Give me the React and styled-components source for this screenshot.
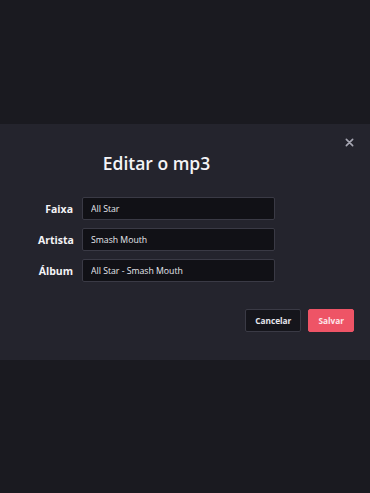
import React from "react";
import styled, { createGlobalStyle } from "styled-components";

const Global = createGlobalStyle`
  html, body { margin: 0; padding: 0; }
  body {
    background: #1a1a20;
    font-family: "Open Sans", "Noto Sans", sans-serif;
    color: #f2f2f5;
    min-height: 100vh;
  }
`;

const Page = styled.div`
  min-height: 493px;
  padding-top: 124px;
  box-sizing: border-box;
`;

const Modal = styled.div`
  position: relative;
  background: #24242d;
  padding: 25px 16px 28px 38px;
  display: flex;
  flex-direction: column;
`;

const Close = styled.button`
  position: absolute;
  top: 10px;
  right: 13px;
  width: 16px;
  height: 16px;
  padding: 0;
  border: none;
  background: transparent;
  color: #a6a6b2;
  display: flex;
  align-items: center;
  justify-content: center;
  cursor: pointer;
`;

const Content = styled.div`
  width: 237px;
  display: flex;
  flex-direction: column;
`;

const Title = styled.h2`
  margin: 0;
  text-align: center;
  font-size: 17.5px;
  line-height: 28px;
  font-weight: 600;
  color: #f4f4f7;
`;

const Form = styled.div`
  margin-top: 20px;
  display: grid;
  grid-template-columns: 35px 193px;
  column-gap: 9px;
  row-gap: 8px;
  align-items: center;
`;

const Label = styled.label`
  text-align: right;
  white-space: nowrap;
  font-size: 10.5px;
  font-weight: 700;
  color: #f4f4f7;
`;

const Input = styled.input`
  height: 23px;
  box-sizing: border-box;
  width: 100%;
  background: #111116;
  border: 1px solid #3a3a45;
  border-radius: 2px;
  color: #e8e8ee;
  font-family: "Open Sans", "Noto Sans", sans-serif;
  font-size: 8.7px;
  padding: 0 8px;
  outline: none;
`;

const Actions = styled.div`
  margin-top: 27px;
  display: flex;
  justify-content: flex-end;
  gap: 7px;
`;

const Button = styled.button`
  height: 23px;
  box-sizing: border-box;
  padding: 0 9px;
  border-radius: 2px;
  font-family: "Open Sans", "Noto Sans", sans-serif;
  font-size: 8.3px;
  font-weight: 700;
  cursor: pointer;
  border: 1px solid ${(p) => (p.$primary ? "#ee5466" : "#3a3a45")};
  background: ${(p) => (p.$primary ? "#ee5466" : "#15151b")};
  color: ${(p) => (p.$primary ? "#fde6ea" : "#e6e6ec")};
`;

const fields = [
  { label: "Faixa", value: "All Star" },
  { label: "Artista", value: "Smash Mouth" },
  { label: "Álbum", value: "All Star - Smash Mouth" },
];

export default function App() {
  return (
    <>
      <Global />
      <Page>
        <Modal>
          <Close aria-label="Fechar">
            <svg width="9" height="9" viewBox="0 0 10 10">
              <path d="M1.5 1.5 L8.5 8.5 M8.5 1.5 L1.5 8.5" stroke="currentColor" strokeWidth="1.8" strokeLinecap="round" />
            </svg>
          </Close>
          <Content>
            <Title>Editar o mp3</Title>
            <Form>
              {fields.map((f) => (
                <React.Fragment key={f.label}>
                  <Label>{f.label}</Label>
                  <Input defaultValue={f.value} />
                </React.Fragment>
              ))}
            </Form>
          </Content>
          <Actions>
            <Button>Cancelar</Button>
            <Button $primary>Salvar</Button>
          </Actions>
        </Modal>
      </Page>
    </>
  );
}
